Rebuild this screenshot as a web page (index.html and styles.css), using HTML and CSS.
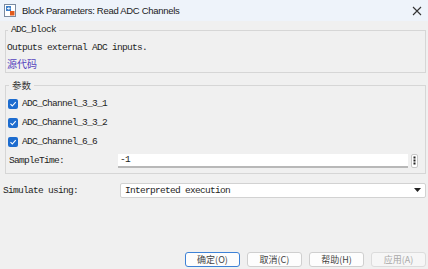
FILE: index.html
```html
<!DOCTYPE html>
<html lang="zh">
<head>
<meta charset="utf-8">
<title>Block Parameters: Read ADC Channels</title>
<link rel="stylesheet" href="styles.css">
</head>
<body>
<div class="window">
  <div class="titlebar">
    <svg class="app-icon" width="12" height="13" viewBox="0 0 12 13">
      <rect x="0.5" y="0.5" width="11" height="12" fill="#fff" stroke="#7a8aa0"/>
      <rect x="2" y="2" width="5" height="5" fill="#3d7fc9"/>
      <path d="M3 4.5h2.5M4.5 3.2l1.3 1.3-1.3 1.3" stroke="#fff" stroke-width="0.9" fill="none"/>
      <rect x="6" y="7" width="4.5" height="4.5" fill="#e25a1c"/>
    </svg>
    <span class="title">Block Parameters: Read ADC Channels</span>
    <svg class="close" width="10" height="10" viewBox="0 0 10 10">
      <path d="M1 1L9 9M9 1L1 9" stroke="#333" stroke-width="1.1"/>
    </svg>
  </div>
  <div class="content">
    <fieldset class="group desc">
      <legend class="legend mono">ADC_block</legend>
      <div class="line mono">Outputs external ADC inputs.</div>
      <div class="line"><a class="source-link">源代码</a></div>
    </fieldset>
    <fieldset class="group params">
      <legend class="legend cjk">参数</legend>
      <div class="row">
        <span class="checkbox"><svg width="8" height="8" viewBox="0 0 8 8"><path d="M1.5 4.2l1.8 1.8 3.4-3.8" stroke="#fff" stroke-width="1.1" fill="none"/></svg></span>
        <span class="mono">ADC_Channel_3_3_1</span>
      </div>
      <div class="row">
        <span class="checkbox"><svg width="8" height="8" viewBox="0 0 8 8"><path d="M1.5 4.2l1.8 1.8 3.4-3.8" stroke="#fff" stroke-width="1.1" fill="none"/></svg></span>
        <span class="mono">ADC_Channel_3_3_2</span>
      </div>
      <div class="row">
        <span class="checkbox"><svg width="8" height="8" viewBox="0 0 8 8"><path d="M1.5 4.2l1.8 1.8 3.4-3.8" stroke="#fff" stroke-width="1.1" fill="none"/></svg></span>
        <span class="mono">ADC_Channel_6_6</span>
      </div>
      <div class="row field-row">
        <span class="mono field-label">SampleTime:</span>
        <span class="input mono">-1</span>
        <span class="more-btn"><svg width="3" height="9" viewBox="0 0 3 9"><rect x="0.5" y="0.5" width="2" height="2" fill="#222"/><rect x="0.5" y="3.5" width="2" height="2" fill="#222"/><rect x="0.5" y="6.5" width="2" height="2" fill="#222"/></svg></span>
      </div>
    </fieldset>
    <div class="sim-row">
      <span class="mono sim-label">Simulate using:</span>
      <span class="select mono">Interpreted execution<svg class="caret" width="7" height="4" viewBox="0 0 7 4"><path d="M0 0h7L3.5 4z" fill="#222"/></svg></span>
    </div>
    <div class="spacer"></div>
    <div class="buttons">
      <span class="btn primary">确定(O)</span>
      <span class="btn">取消(C)</span>
      <span class="btn">帮助(H)</span>
      <span class="btn disabled">应用(A)</span>
    </div>
  </div>
</div>
</body>
</html>
```
FILE: styles.css
```css
* { box-sizing: border-box; }
html, body { margin: 0; padding: 0; }
body { background: #f0f0f0; width: 428px; height: 269px; overflow: hidden; }
.window { width: 428px; height: 269px; display: flex; flex-direction: column; }
.titlebar {
  height: 21px; background: #eef3fa; display: flex; align-items: center;
  padding: 0 6px 0 4px; flex: none;
}
.app-icon { flex: none; margin-top: -1px; }
.title { font-family: "Liberation Sans", Arial, sans-serif; font-size: 9.5px; letter-spacing: -0.3px; color: #1a1a1a; margin-left: 6px; flex: 1; }
.close { flex: none; }
.content { flex: 1; display: flex; flex-direction: column; padding: 3px 2px 2px 3px; }
.mono { font-family: "Liberation Mono", "Courier New", monospace; font-size: 9.5px; letter-spacing: -0.7px; color: #1e1e1e; }
.cjk { font-family: "Noto Sans CJK SC", sans-serif; }
.group {
  margin: 0 0 0 2px; border: 1px solid #d6d6d6; padding: 0 2px 3px 1px; min-width: 0;
}
.legend { padding: 0 3px; margin-left: 1px; line-height: 12px; height: 12px; }
.legend.cjk { font-size: 9.5px; color: #333; margin-left: 2px; }
.desc { padding-top: 3px; padding-bottom: 1px; }
.line { height: 16px; display: flex; align-items: center; }
.source-link { font-family: "Noto Sans CJK SC", sans-serif; font-size: 10px; color: #5443bd; }
.params { margin-top: 6px; padding-top: 3px; }
.row { height: 19px; display: flex; align-items: center; }
.checkbox {
  width: 10px; height: 10px; background: #1d6ccf; border-radius: 2px; margin: 0 4px 0 1px;
  display: flex; align-items: center; justify-content: center; flex: none;
}
.checkbox svg { display: block; }
.field-label { width: 109px; margin-left: 2px; flex: none; }
.input {
  flex: 1; height: 14px; background: #fff; border-bottom: 2px solid #b8b8b8;
  display: flex; align-items: center; padding-left: 2px;
}
.more-btn {
  width: 7px; height: 14px; margin-left: 3px; margin-right: 5px; border: 1px solid #c8c8c8; border-radius: 2px;
  background: #fff; display: flex; align-items: center; justify-content: center; flex: none;
}
.more-btn svg { display: block; }
.sim-row { display: flex; align-items: center; margin-top: 9px; height: 14px; }
.sim-label { width: 117px; flex: none; }
.select {
  flex: 1; height: 15px; background: #fff; border: 1px solid #d2d2d2; border-radius: 2px;
  display: flex; align-items: center; padding: 0 4px 0 4px;
}
.caret { margin-left: auto; }
.spacer { flex: 1; }
.buttons { display: flex; justify-content: flex-end; gap: 7px; margin-bottom: 0; }
.btn {
  width: 55px; height: 15px; border: 1px solid #cfcfcf; border-radius: 3px; background: #fdfdfd;
  font-family: "Noto Sans CJK SC", sans-serif; font-size: 9px; color: #444;
  display: flex; align-items: center; justify-content: center;
}
.btn.primary { border: 1.5px solid #3d82d6; }
.btn.disabled { color: #a8a8a8; background: #f6f6f6; border-color: #dcdcdc; }
```
